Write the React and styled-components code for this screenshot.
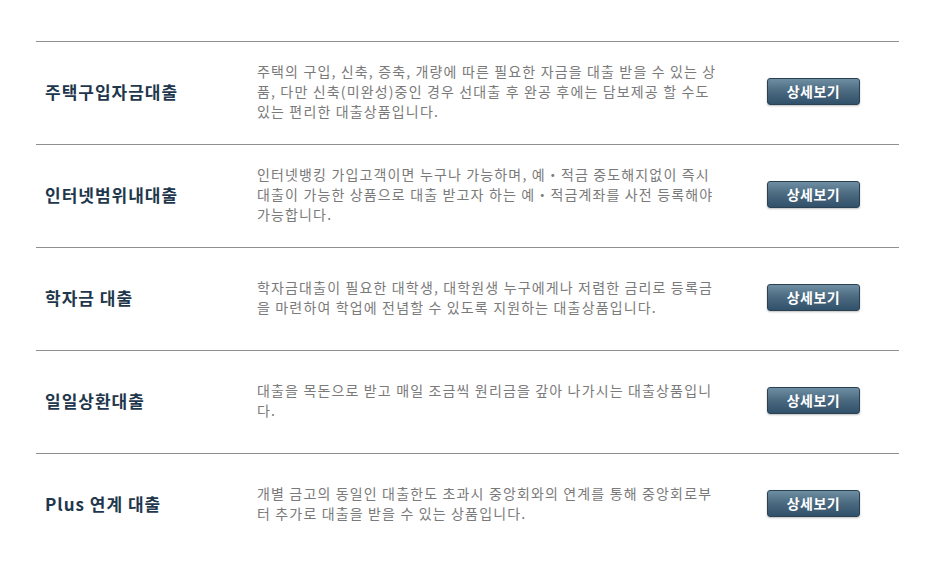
import styled, { createGlobalStyle } from 'styled-components'

const GlobalStyle = createGlobalStyle`
  body {
    margin: 0;
    background: #ffffff;
    font-family: "Noto Sans CJK KR", "Noto Sans", sans-serif;
  }
`;

const List = styled.div`
  width: 863px;
  margin: 41px 0 0 36px;
`;

const Row = styled.div`
  display: grid;
  grid-template-columns: 221px 510px 93px;
  align-items: center;
  height: 103px;
  padding-bottom: 4px;
  box-sizing: border-box;
  border-top: 1px solid #8f8f8f;
`;

const Title = styled.div`
  padding-left: 9px;
  font-size: 17px;
  font-weight: 700;
  letter-spacing: 1px;
  color: #1f374c;
`;

const Desc = styled.p`
  margin: 0;
  font-size: 14px;
  line-height: 20px;
  letter-spacing: 1.15px;
  color: #7a7a7a;
`;

const Line = styled.span`
  display: block;
  white-space: nowrap;
`;

const Button = styled.button`
  width: 93px;
  height: 27px;
  padding: 0;
  border: 1px solid #2b4152;
  border-radius: 3px;
  background: linear-gradient(#6e8ea3 0%, #4d6c82 45%, #31506a 100%);
  box-shadow: 0 1px 2px rgba(0, 0, 0, 0.25);
  color: #ffffff;
  font-family: "Noto Sans CJK KR", sans-serif;
  font-size: 14px;
  font-weight: 700;
  letter-spacing: 0.5px;
  cursor: pointer;
`;

const loans = [
  {
    title: '주택구입자금대출',
    desc: [
      '주택의 구입, 신축, 증축, 개량에 따른 필요한 자금을 대출 받을 수 있는 상',
      '품, 다만 신축(미완성)중인 경우 선대출 후 완공 후에는 담보제공 할 수도',
      '있는 편리한 대출상품입니다.',
    ],
  },
  {
    title: '인터넷범위내대출',
    desc: [
      '인터넷뱅킹 가입고객이면 누구나 가능하며, 예・적금 중도해지없이 즉시',
      '대출이 가능한 상품으로 대출 받고자 하는 예・적금계좌를 사전 등록해야',
      '가능합니다.',
    ],
  },
  {
    title: '학자금 대출',
    desc: [
      '학자금대출이 필요한 대학생, 대학원생 누구에게나 저렴한 금리로 등록금',
      '을 마련하여 학업에 전념할 수 있도록 지원하는 대출상품입니다.',
    ],
  },
  {
    title: '일일상환대출',
    desc: [
      '대출을 목돈으로 받고 매일 조금씩 원리금을 갚아 나가시는 대출상품입니',
      '다.',
    ],
  },
  {
    title: 'Plus 연계 대출',
    desc: [
      '개별 금고의 동일인 대출한도 초과시 중앙회와의 연계를 통해 중앙회로부',
      '터 추가로 대출을 받을 수 있는 상품입니다.',
    ],
  },
]

const App = () => {
  return (
    <>
      <GlobalStyle />
      <List>
        {loans.map((item, i) => (
          <Row key={i}>
            <Title>{item.title}</Title>
            <Desc>
              {item.desc.map((line, j) => (
                <Line key={j}>{line}</Line>
              ))}
            </Desc>
            <Button>상세보기</Button>
          </Row>
        ))}
      </List>
    </>
  )
}

export default App
